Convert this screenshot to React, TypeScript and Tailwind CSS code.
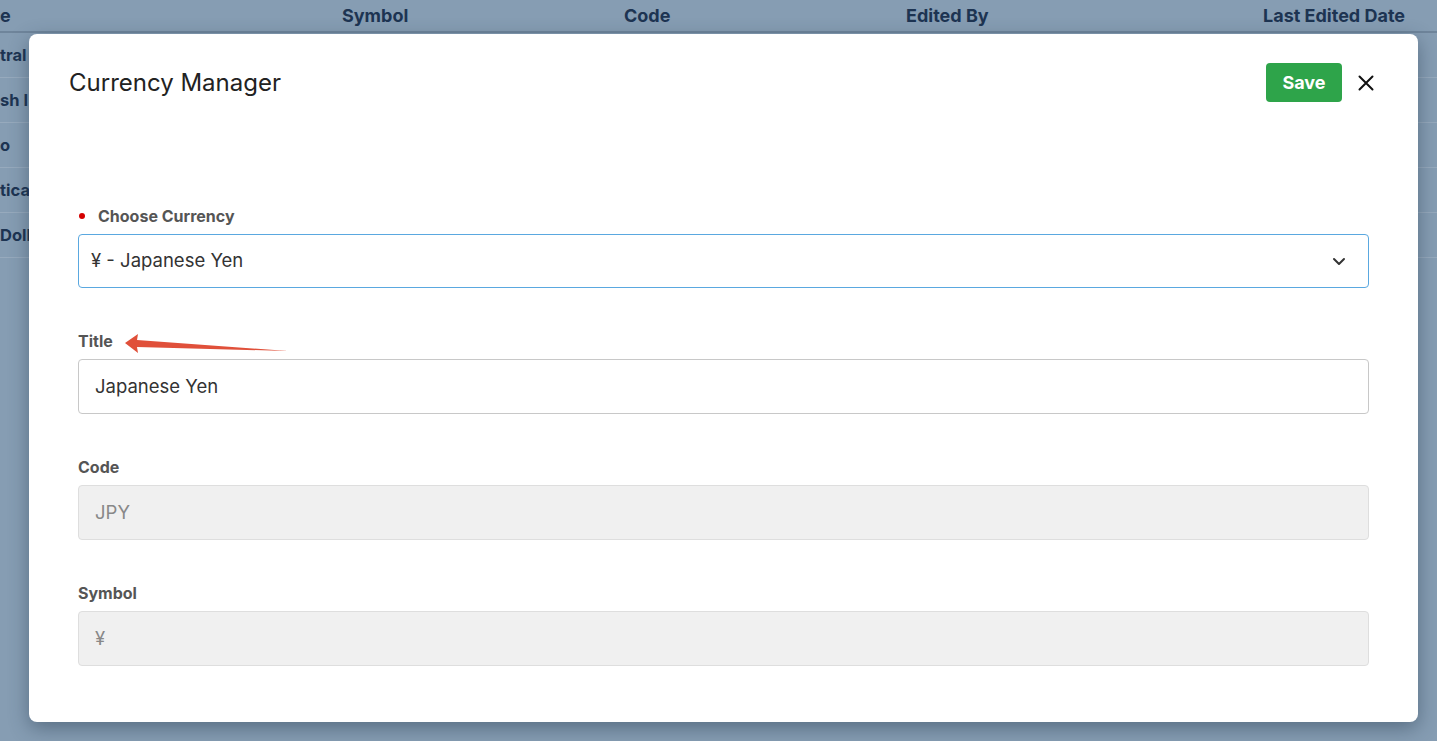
import React from 'react';

/**
 * Currency Manager modal over the currency table
 */

const headers = ['e', 'Symbol', 'Code', 'Edited By', 'Last Edited Date'];

const rows = ['tral', 'sh I', 'o', 'tica', 'Doll'];

function Field({
  label,
  value,
  required = false,
  disabled = false,
  select = false,
}: {
  label: string;
  value: string;
  required?: boolean;
  disabled?: boolean;
  select?: boolean;
}) {
  return (
    <div>
      <div className="flex items-center h-5 mb-2 text-[16px] font-bold text-[#555]">
        {required && <span className="w-[6px] h-[6px] rounded-full bg-[#d40000] ml-[1px] mr-[13px]" />}
        <span>{label}</span>
      </div>
      {select ? (
        <div className="flex items-center justify-between h-[54px] rounded-[4px] border border-[#5aa8e0] bg-white pl-[12px] pr-[22px] text-[18.5px] text-[#333]">
          <span>{value}</span>
          <svg width="14" height="9" viewBox="0 0 14 9" fill="none">
            <path d="M2 2l5 5 5-5" stroke="#333" strokeWidth="2" strokeLinecap="round" strokeLinejoin="round" />
          </svg>
        </div>
      ) : (
        <div
          className={`flex items-center h-[55px] rounded-[4px] border px-4 text-[18.5px] ${
            disabled ? 'bg-[#f0f0f0] border-[#dedede] text-[#888]' : 'bg-white border-[#c8c8c8] text-[#333]'
          }`}
        >
          {value}
        </div>
      )}
    </div>
  );
}

export default function App() {
  return (
    <div
      className="relative w-[1437px] h-[741px] overflow-hidden bg-[#869db3]"
      style={{ fontFamily: 'Inter, "Noto Sans", sans-serif' }}
    >
      {/* Background table (dimmed) */}
      <div className="text-[#1d3452] font-bold">
        <div className="grid grid-cols-[342px_282px_282px_357px_1fr] h-[33px] items-center text-[18px] border-b-2 border-[#6f859b]">
          {headers.map((h) => (
            <span key={h}>{h}</span>
          ))}
        </div>
        {rows.map((r, i) => (
          <div key={i} className="h-[45px] flex items-center text-[16.5px] border-b border-[#97aabd]">
            <span>{r}</span>
          </div>
        ))}
      </div>

      {/* Modal */}
      <div className="absolute left-[29px] top-[34px] w-[1389px] h-[688px] rounded-[8px] bg-white shadow-[0_6px_20px_rgba(30,50,70,0.45)]">
        <div className="flex items-center justify-between pt-[29px] pl-10 pr-[44px]">
          <h1 className="text-[24px] text-[#222] font-normal">Currency Manager</h1>
          <div className="flex items-center gap-[16px]">
            <button className="h-[39px] w-[76px] rounded-[4px] bg-[#2ea44a] text-white text-[18px] font-bold">
              Save
            </button>
            <svg width="16" height="16" viewBox="0 0 16 16" fill="none">
              <path d="M1.5 1.5l13 13M14.5 1.5l-13 13" stroke="#111" strokeWidth="2" strokeLinecap="round" />
            </svg>
          </div>
        </div>

        <div className="flex flex-col gap-[43px] px-[49px] pt-[104px]">
          <Field label="Choose Currency" value="¥ - Japanese Yen" required select />
          <Field label="Title" value="Japanese Yen" />
          <Field label="Code" value="JPY" disabled />
          <Field label="Symbol" value="¥" disabled />
        </div>
      </div>

      {/* Annotation arrow */}
      <svg className="absolute left-0 top-0 pointer-events-none" width="1437" height="741">
        <polygon points="125,343 138,334 137,340 288,351 137,347 138,353" fill="#e0503a" />
      </svg>
    </div>
  );
}
